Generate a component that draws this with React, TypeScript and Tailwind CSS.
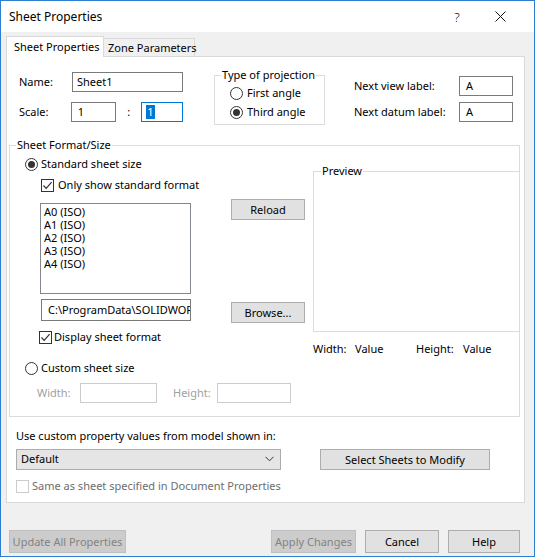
import React from "react";

function Radio({ checked }: { checked?: boolean }) {
  return (
    <span className="w-[13px] h-[13px] rounded-full border border-[#333333] bg-white flex items-center justify-center shrink-0">
      {checked && <span className="w-[7px] h-[7px] rounded-full bg-[#333333]" />}
    </span>
  );
}

function Check({ checked, disabled }: { checked?: boolean; disabled?: boolean }) {
  return (
    <span
      className={
        "w-[13px] h-[13px] border bg-white flex items-center justify-center shrink-0 " +
        (disabled ? "border-[#cccccc]" : "border-[#333333]")
      }
    >
      {checked && (
        <svg width="11" height="11" viewBox="0 0 11 11">
          <path d="M1.5 5.5 L4.2 8.3 L9.6 2.2" fill="none" stroke="#333333" strokeWidth="1.2" />
        </svg>
      )}
    </span>
  );
}

function Btn({ children, w, disabled, h = "h-[21px]" }: { children: React.ReactNode; w: string; disabled?: boolean; h?: string }) {
  return (
    <div
      className={
        "flex items-center justify-center border shrink-0 " +
        w +
        " " +
        h +
        " " +
        (disabled ? "bg-[#cccccc] border-[#bfbfbf] text-[#838383]" : "bg-[#e1e1e1] border-[#adadad] text-black")
      }
    >
      {children}
    </div>
  );
}

export default function App() {
  return (
    <div className="w-[535px] h-[557px] border border-[#2b7ed0] bg-[#f0f0f0] flex flex-col font-['Noto_Sans',sans-serif] text-[11px] leading-[16px] text-black overflow-hidden whitespace-nowrap">
      {/* title bar */}
      <div className="h-[31px] bg-white flex items-center pl-[8px] pr-[24px] shrink-0">
        <span className="text-[12px]">Sheet Properties</span>
        <span className="ml-auto w-[20px] text-center text-[13px] font-light">?</span>
        <span className="ml-[23px] w-[20px] flex justify-center">
          <svg width="11" height="11" viewBox="0 0 11 11">
            <path d="M0.5 0.5 L10.5 10.5 M10.5 0.5 L0.5 10.5" stroke="#111" strokeWidth="1" />
          </svg>
        </span>
      </div>

      {/* tabs */}
      <div className="flex items-end pl-[5px] pt-[4px] h-[24px] shrink-0">
        <div className="relative z-10 w-[98px] h-[21px] -mb-[1px] bg-white border-t border-l border-r border-[#d9d9d9] pl-[7px] flex items-center">
          Sheet Properties
        </div>
        <div className="w-[91px] h-[18px] border-t border-r border-[#d9d9d9] pl-[4px] flex items-center">
          Zone Parameters
        </div>
      </div>

      {/* panel */}
      <div className="ml-[5px] w-[519px] h-[447px] border border-[#d9d9d9] bg-white flex flex-col shrink-0">
        {/* row 1 */}
        <div className="flex items-start mt-[15px]">
          <div className="ml-[12px] flex flex-col w-[164px]">
            <div className="flex items-center h-[20px]">
              <span className="w-[53px]">Name:</span>
              <div className="w-[111px] h-[20px] border border-[#7a7a7a] pl-[4px] flex items-center">Sheet1</div>
            </div>
            <div className="flex items-center h-[20px] mt-[10px]">
              <span className="w-[52px]">Scale:</span>
              <div className="w-[46px] h-[20px] border border-[#7a7a7a] pl-[6px] flex items-center">1</div>
              <span className="w-[25px] text-center">:</span>
              <div className="w-[42px] h-[20px] border border-[#0078d7] pl-[4px] flex items-center">
                <span className="bg-[#0078d7] text-white px-[1px] leading-[14px]">1</span>
              </div>
            </div>
          </div>
          <div className="ml-[31px] mt-[3px] w-[111px] h-[50px] border border-[#dcdcdc] flex flex-col">
            <span className="-mt-[9px] ml-[6px] px-[1px] bg-white w-fit">Type of projection</span>
            <div className="flex items-center h-[16px] ml-[15px] mt-[2px]">
              <Radio />
              <span className="ml-[4px]">First angle</span>
            </div>
            <div className="flex items-center h-[16px] ml-[15px] mt-[3px]">
              <Radio checked />
              <span className="ml-[4px]">Third angle</span>
            </div>
          </div>
          <div className="ml-[29px] mt-[4px] flex flex-col">
            <div className="flex items-center h-[20px]">
              <span className="w-[105px]">Next view label:</span>
              <div className="w-[54px] h-[20px] border border-[#7a7a7a] pl-[6px] flex items-center">A</div>
            </div>
            <div className="flex items-center h-[20px] mt-[6px]">
              <span className="w-[105px]">Next datum label:</span>
              <div className="w-[54px] h-[20px] border border-[#7a7a7a] pl-[6px] flex items-center">A</div>
            </div>
          </div>
        </div>

        {/* Sheet Format/Size group */}
        <div className="ml-[2px] mt-[20px] w-[511px] h-[272px] border border-[#dcdcdc] flex flex-col shrink-0">
          <span className="-mt-[9px] ml-[6px] px-[1px] bg-white w-fit">Sheet Format/Size</span>
          <div className="flex items-center h-[16px] mt-[3px] ml-[15px]">
            <Radio checked />
            <span className="ml-[3px]">Standard sheet size</span>
          </div>
          <div className="flex items-start -mt-[1px]">
            {/* left column */}
            <div className="ml-[29px] w-[152px] flex flex-col">
              <div className="flex items-center h-[16px] mt-[6px] ml-[2px]">
                <Check checked />
                <span className="ml-[4px]">Only show standard format</span>
              </div>
              <div className="ml-[1px] mt-[10px] w-[151px] h-[91px] border border-[#828790] pl-[3px] pt-[1px] flex flex-col">
                <span className="h-[13px] leading-[13px]">A0 (ISO)</span>
                <span className="h-[13px] leading-[13px]">A1 (ISO)</span>
                <span className="h-[13px] leading-[13px]">A2 (ISO)</span>
                <span className="h-[13px] leading-[13px]">A3 (ISO)</span>
                <span className="h-[13px] leading-[13px]">A4 (ISO)</span>
              </div>
              <div className="ml-[2px] mt-[5px] w-[150px] h-[22px] border border-[#7a7a7a] pl-[6px] flex items-center overflow-hidden">
                C:\ProgramData\SOLIDWORKS
              </div>
              <div className="flex items-center h-[16px] mt-[8px]">
                <Check checked />
                <span className="ml-[2px]">Display sheet format</span>
              </div>
            </div>
            {/* middle column */}
            <div className="ml-[40px] flex flex-col">
              <div className="mt-[28px]">
                <Btn w="w-[74px]">Reload</Btn>
              </div>
              <div className="mt-[82px]">
                <Btn w="w-[74px]">Browse...</Btn>
              </div>
            </div>
            {/* preview */}
            <div className="ml-[8px] flex flex-col">
              <div className="w-[207px] h-[161px] border border-[#dcdcdc] flex flex-col">
                <span className="-mt-[9px] ml-[7px] px-[1px] bg-white w-fit">Preview</span>
              </div>
              <div className="flex items-center h-[16px] mt-[9px]">
                <span className="w-[42px]">Width:</span>
                <span className="w-[61px]">Value</span>
                <span className="w-[47px]">Height:</span>
                <span>Value</span>
              </div>
            </div>
          </div>
          <div className="flex items-center h-[16px] mt-[3px] ml-[15px]">
            <Radio />
            <span className="ml-[3px]">Custom sheet size</span>
          </div>
          <div className="flex items-center h-[20px] mt-[7px] ml-[27px] text-[#a0a0a0]">
            <span className="w-[43px]">Width:</span>
            <div className="w-[77px] h-[20px] border border-[#cccccc]" />
            <span className="ml-[16px] w-[44px]">Height:</span>
            <div className="w-[74px] h-[20px] border border-[#cccccc]" />
          </div>
        </div>

        <div className="ml-[9px] mt-[11px] h-[16px] flex items-center">Use custom property values from model shown in:</div>
        <div className="flex items-center mt-[4px] ml-[9px]">
          <div className="w-[265px] h-[21px] bg-[#e5e5e5] border border-[#acacac] pl-[4px] pr-[6px] flex items-center">
            <span>Default</span>
            <svg className="ml-auto" width="9" height="6" viewBox="0 0 9 6">
              <path d="M0.5 0.8 L4.5 4.8 L8.5 0.8" fill="none" stroke="#333" strokeWidth="1" />
            </svg>
          </div>
          <div className="ml-[39px] mt-[1px]">
            <Btn w="w-[170px]">Select Sheets to Modify</Btn>
          </div>
        </div>
        <div className="flex items-center h-[16px] mt-[8px] ml-[9px] text-[#6d6d6d]">
          <Check disabled />
          <span className="ml-[3px]">Same as sheet specified in Document Properties</span>
        </div>
      </div>

      {/* bottom buttons */}
      <div className="flex items-center mt-[27px] ml-[8px]">
        <Btn w="w-[117px]" h="h-[23px]" disabled>Update All Properties</Btn>
        <div className="ml-[145px]">
          <Btn w="w-[85px]" h="h-[23px]" disabled>Apply Changes</Btn>
        </div>
        <div className="ml-[9px]">
          <Btn w="w-[74px]" h="h-[23px]">Cancel</Btn>
        </div>
        <div className="ml-[9px]">
          <Btn w="w-[72px]" h="h-[23px]">Help</Btn>
        </div>
      </div>
    </div>
  );
}
